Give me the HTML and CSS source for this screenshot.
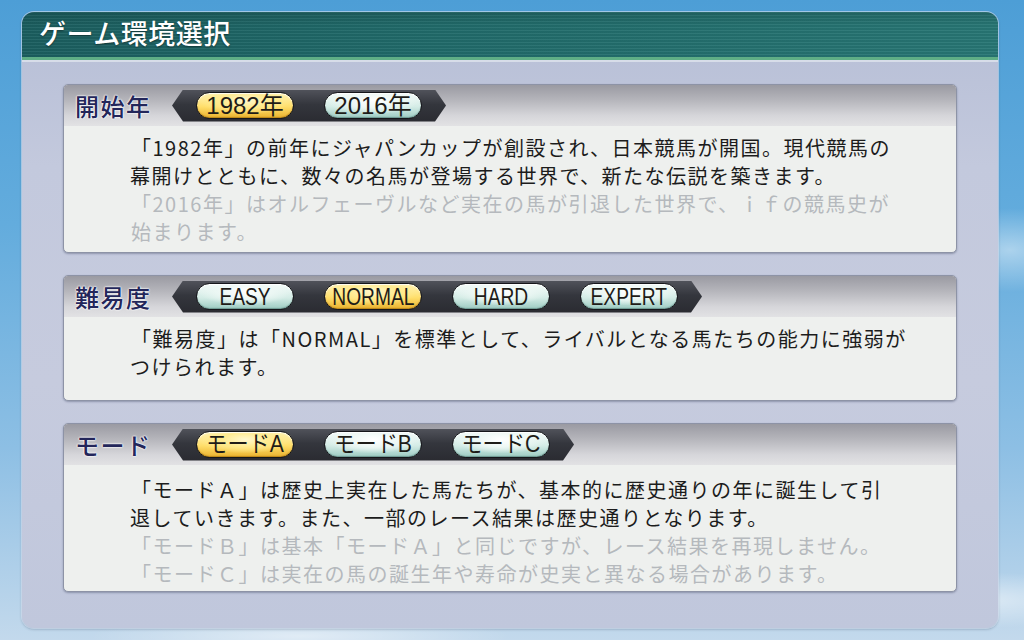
FILE: index.html
```html
<!DOCTYPE html>
<html lang="ja">
<head>
<meta charset="utf-8">
<title>ゲーム環境選択</title>
<link rel="stylesheet" href="styles.css">
</head>
<body>
<div class="window">
  <div class="titlebar"><h1 class="title">ゲーム環境選択</h1></div>
  <div class="content">
    <section class="card">
      <div class="card-head">
        <div class="label">開始年</div>
        <div class="selector">
          <div class="pill year on"><span>1982年</span></div>
          <div class="pill year"><span>2016年</span></div>
        </div>
      </div>
      <div class="card-body">
        <p class="line">「1982年」の前年にジャパンカップが創設され、日本競馬が開国。現代競馬の</p>
        <p class="line">幕開けとともに、数々の名馬が登場する世界で、新たな伝説を築きます。</p>
        <p class="line dim">「2016年」はオルフェーヴルなど実在の馬が引退した世界で、ｉｆの競馬史が</p>
        <p class="line dim">始まります。</p>
      </div>
    </section>
    <section class="card card-short">
      <div class="card-head">
        <div class="label">難易度</div>
        <div class="selector">
          <div class="pill"><span>EASY</span></div>
          <div class="pill on"><span>NORMAL</span></div>
          <div class="pill"><span>HARD</span></div>
          <div class="pill"><span>EXPERT</span></div>
        </div>
      </div>
      <div class="card-body">
        <p class="line">「難易度」は「NORMAL」を標準として、ライバルとなる馬たちの能力に強弱が</p>
        <p class="line">つけられます。</p>
      </div>
    </section>
    <section class="card card-mode">
      <div class="card-head">
        <div class="label">モード</div>
        <div class="selector">
          <div class="pill mode on"><span>モードA</span></div>
          <div class="pill mode"><span>モードB</span></div>
          <div class="pill mode"><span>モードC</span></div>
        </div>
      </div>
      <div class="card-body">
        <p class="line">「モードＡ」は歴史上実在した馬たちが、基本的に歴史通りの年に誕生して引</p>
        <p class="line">退していきます。また、一部のレース結果は歴史通りとなります。</p>
        <p class="line dim">「モードＢ」は基本「モードＡ」と同じですが、レース結果を再現しません。</p>
        <p class="line dim">「モードＣ」は実在の馬の誕生年や寿命が史実と異なる場合があります。</p>
      </div>
    </section>
  </div>
</div>
</body>
</html>
```
FILE: styles.css
```css
* { box-sizing: border-box; }
html, body { margin: 0; padding: 0; }
body {
  width: 1024px;
  height: 640px;
  overflow: hidden;
  font-family: "Noto Sans CJK JP", "Noto Sans", sans-serif;
  background:
    radial-gradient(ellipse 120px 60px at 1010px 250px, rgba(255,255,255,0.45), rgba(255,255,255,0) 70%),
    radial-gradient(ellipse 200px 40px at 980px 600px, rgba(255,255,255,0.5), rgba(255,255,255,0) 70%),
    radial-gradient(ellipse 300px 30px at 300px 636px, rgba(255,255,255,0.5), rgba(255,255,255,0) 70%),
    linear-gradient(180deg, #4d9ed6 0%, #63acdd 35%, #8dbfe4 70%, #c3d9ec 100%);
  padding: 12px 26px 12px 22px;
}
.window {
  height: 616px;
  border-radius: 12px;
  overflow: hidden;
  display: flex;
  flex-direction: column;
  background: linear-gradient(180deg, #b6bed6 0%, #c3c9dd 25%, #c6cbde 60%, #c0c7dc 100%);
  box-shadow: 0 0 0 1px rgba(220,230,245,0.6), 0 1px 3px rgba(0,30,60,0.35);
}
.titlebar {
  height: 48px;
  flex: none;
  display: flex;
  align-items: center;
  padding-left: 17px;
  background:
    repeating-linear-gradient(180deg, rgba(255,255,255,0.05) 0 1px, rgba(0,0,0,0.05) 1px 3px),
    linear-gradient(180deg, rgba(0,0,0,0.12) 0%, rgba(0,0,0,0) 30%),
    linear-gradient(90deg, #1b5f60 0%, #226d6c 50%, #287775 100%);
  border-bottom: 3px solid #5fae86;
  box-shadow: 0 2px 0 #d7dde9;
}
.title {
  margin: 0;
  color: #ffffff;
  font-size: 27px;
  font-weight: 500;
  letter-spacing: 0.5px;
  line-height: 1;
  text-shadow: 0 1px 2px rgba(0,0,0,0.45);
  padding-bottom: 4px;
}
.content {
  flex: 1;
  display: flex;
  flex-direction: column;
  gap: 22px;
  padding: 24px 41px 0 41px;
}
.card {
  border: 1px solid #8d93a6;
  border-radius: 5px;
  overflow: hidden;
  background: #eef0ee;
  box-shadow: 0 1px 2px rgba(40,50,80,0.35);
}
.card-head {
  height: 41px;
  display: flex;
  align-items: center;
  padding-left: 11px;
  background: linear-gradient(180deg, #9a9aa2 0%, #b4b4ba 35%, #d6d6da 75%, #e2e2e4 100%);
}
.label {
  width: 97px;
  font-size: 24px;
  font-weight: 500;
  color: #23265a;
  letter-spacing: 1.5px;
  text-shadow: 0 0 2px #ffffff, 0 0 2px #ffffff, 0 0 1px #ffffff;
}
.selector {
  height: 32px;
  display: flex;
  align-items: center;
  gap: 30px;
  padding: 0 24px;
  background: linear-gradient(180deg, #50525a 0%, #34363d 45%, #2a2b31 100%);
  clip-path: polygon(11px 0, calc(100% - 11px) 0, 100% 50%, calc(100% - 11px) 100%, 11px 100%, 0 50%);
}
.pill {
  width: 98px;
  height: 27px;
  flex: none;
  border-radius: 14px;
  border: 1px solid #15161a;
  display: flex;
  align-items: center;
  justify-content: center;
  background: radial-gradient(ellipse 60% 70% at 50% 30%, #ffffff 0%, #eef8f5 40%, rgba(238,248,245,0) 80%),
    linear-gradient(180deg, #f4fbf9 0%, #d4ece6 55%, #9ccbc2 100%);
  box-shadow: inset 0 -1px 1px rgba(60,100,95,0.5), inset 0 1px 1px rgba(255,255,255,0.9);
}
.pill.on {
  background: radial-gradient(ellipse 60% 70% at 50% 30%, #fff8d0 0%, #ffeb90 40%, rgba(255,235,144,0) 80%),
    linear-gradient(180deg, #fff4b8 0%, #ffde6a 55%, #eab22e 100%);
  box-shadow: inset 0 -1px 1px rgba(140,90,0,0.5), inset 0 1px 1px rgba(255,255,255,0.9);
}
.pill span {
  display: block;
  font-family: "Liberation Sans", "Noto Sans CJK JP", sans-serif;
  font-size: 24px;
  line-height: 25px;
  height: 25px;
  color: #1e1c18;
  transform: scaleX(0.8);
  white-space: nowrap;
}
.pill.year span {
  font-size: 24px;
  transform: none;
}
.pill.mode span {
  font-size: 23px;
  transform: scaleX(0.92);
}
.card-body {
  padding: 8px 0 0 67px;
  min-height: 126px;
}
.card-short .card-body {
  min-height: 83px;
  padding-top: 8px;
}
.card-mode .card-body {
  padding-top: 11px;
}
.line {
  margin: 0;
  font-size: 20px;
  line-height: 28px;
  letter-spacing: 1.5px;
  color: #1c1c1c;
  white-space: nowrap;
}
.card-body .line:nth-child(2) { margin-left: -1px; }
.line.dim { color: #b5b9bd; }
```
